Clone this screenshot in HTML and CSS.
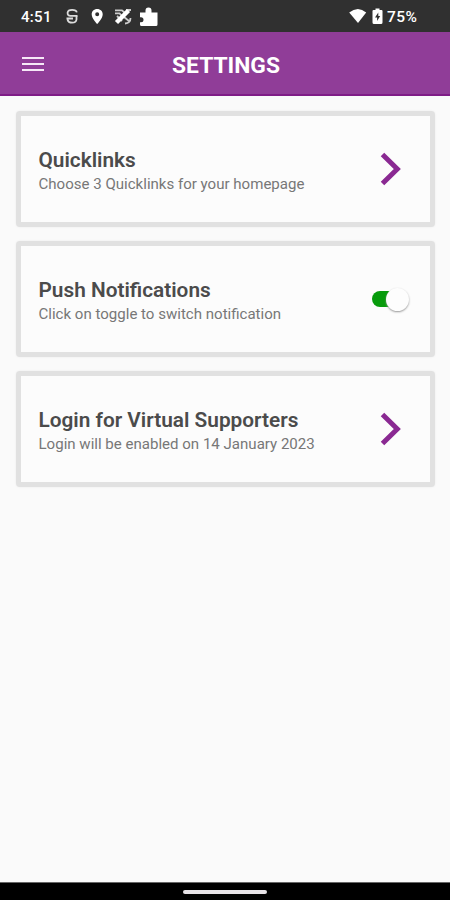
FILE: index.html
```html
<!DOCTYPE html>
<html lang="en">
<head>
<meta charset="utf-8">
<title>Settings</title>
<link rel="stylesheet" href="styles.css">
</head>
<body>
<div class="status">
  <span class="time">4:51</span>
  <svg class="notices" width="96" height="24" viewBox="0 0 96 24">
    <g fill="none" stroke="#ddd" stroke-width="1.8">
      <path d="M12.800 8.400C12 5.200 4.200 5 3.600 8.600C3.400 11.300 5 11.800 6.500 11.800H13.500"/>
      <path d="M2.500 14.500H9M3.500 15.500C4.500 19.800 12 19.800 12.500 15.500V12"/>
    </g>
    <path fill="#fff" fill-rule="evenodd" d="M33.200 5C29.900 5 27.700 7.300 27.700 10.400C27.700 14.300 33.200 20 33.200 20S38.700 14.300 38.700 10.400C38.700 7.300 36.500 5 33.200 5ZM33.200 8.200A2 2 0 1 1 33.200 12.200A2 2 0 1 1 33.200 8.200Z"/>
    <path fill="none" stroke="#ccc" stroke-width="1.800" d="M51 6.300H58L61 9M51 9.300H55.500L58 12M62 6H67M60 13L65 17M61 19.500Q66.500 19 66.500 14M53 12L58 17"/>
    <path fill="none" stroke="#fff" stroke-width="4.500" d="M52.500 18.500L64.500 6.500"/>
    <path fill="#fff" d="M76 8.500H81.500V6.500A3 3 0 0 1 87.500 6.500V8.500H93.500V20.500Q93.500 22 92 22H77.500Q76 22 76 20.500V18.200H77A2.300 2.300 0 0 0 77 13.200H76Z"/>
  </svg>
  <svg class="power" width="36" height="24" viewBox="0 0 36 24">
    <path fill="#fff" d="M.2 8.500Q9 1.500 17.200 8.500L9 19Z"/>
    <path fill="#fff" d="M26.500 4.500H30.500V6H32.500Q33.500 6 33.500 7V18.500Q33.500 20 32 20H25Q23.500 20 23.500 18.500V7Q23.500 6 24.500 6H26.500Z"/>
    <path fill="#303030" d="M29.300 8.500L26 13.500H28.100V17L31.200 12H29.300Z"/>
  </svg>
  <span class="percent">75%</span>
</div>
<header class="bar">
  <div class="menu"><i></i><i></i><i></i></div>
  <h1>SETTINGS</h1>
</header>
<main>
  <section class="card">
    <div class="copy"><h2>Quicklinks</h2><p>Choose 3 Quicklinks for your homepage</p></div>
    <svg class="chevron" width="24" height="36" viewBox="0 0 24 36"><path d="M3.500 3.500L18.300 18L3.500 32.500"/></svg>
  </section>
  <section class="card">
    <div class="copy"><h2>Push Notifications</h2><p>Click on toggle to switch notification</p></div>
    <div class="toggle"><div class="knob"></div></div>
  </section>
  <section class="card">
    <div class="copy"><h2>Login for Virtual Supporters</h2><p>Login will be enabled on 14 January 2023</p></div>
    <svg class="chevron" width="24" height="36" viewBox="0 0 24 36"><path d="M3.500 3.500L18.300 18L3.500 32.500"/></svg>
  </section>
</main>
<footer><div class="handle"></div></footer>
</body>
</html>
```

FILE: styles.css
```css
* { box-sizing: border-box; }
body { margin: 0; height: 900px; display: flex; flex-direction: column; background: #fafafa; font-family: Roboto, sans-serif; overflow: hidden; }
h1, h2, p { margin: 0; white-space: nowrap; }
.status { height: 32px; background: #303030; color: #fff; display: flex; align-items: center; padding: 2px 32px 0 21px; font-size: 15px; font-weight: 500; }
.time { width: 43px; letter-spacing: .3px; }
.notices { margin-top: -2px; }
.power { margin-left: auto; margin-right: 2px; margin-top: -2px; }
.percent { width: 31px; font-size: 15.5px; letter-spacing: .4px; }
.bar { height: 64px; background: #903d98; border-bottom: 2px solid #7f1c87; position: relative; display: flex; align-items: center; justify-content: center; padding: 5px 0 0 2px; color: #fff; }
.bar h1 { font-size: 22.8px; line-height: 26px; font-weight: 700; }
.menu { position: absolute; left: 22px; top: 25px; display: grid; gap: 4px; }
.menu i { width: 22px; height: 2px; background: #f6e8f7; }
main { flex: 1; padding: 15px 15px 0 16px; display: flex; flex-direction: column; gap: 14px; }
.card { height: 116px; border: 5px solid #e1e1e1; border-radius: 4px; background: #fcfcfc; box-shadow: 0 0 2px #e8e8e8; display: flex; align-items: center; justify-content: space-between; padding: 0 24px 0 17.5px; }
.copy { padding-top: 3px; }
.card h2 { font-size: 20.8px; line-height: 26px; font-weight: 600; color: #4b4b4b; }
.card p { font-size: 15.05px; line-height: 22px; color: #777; }
.chevron { margin-right: 3px; }
.chevron path { fill: none; stroke: #8a2992; stroke-width: 5; }
.toggle { width: 35px; height: 16px; margin: 0 -1px 0 0; border-radius: 8px; background: linear-gradient(90deg, #079b0b 20px, transparent 20px); display: flex; align-items: center; justify-content: flex-end; }
.knob { width: 23px; height: 23px; margin-right: -2px; border-radius: 50%; background: #fdfdfd; box-shadow: 0 1px 2px #999; flex: none; }
footer { height: 18px; background: #000; border-top: 1px solid #666; display: flex; justify-content: center; padding-top: 7px; }
.handle { width: 84px; height: 4px; border-radius: 2px; background: #e8e4e8; }
```
